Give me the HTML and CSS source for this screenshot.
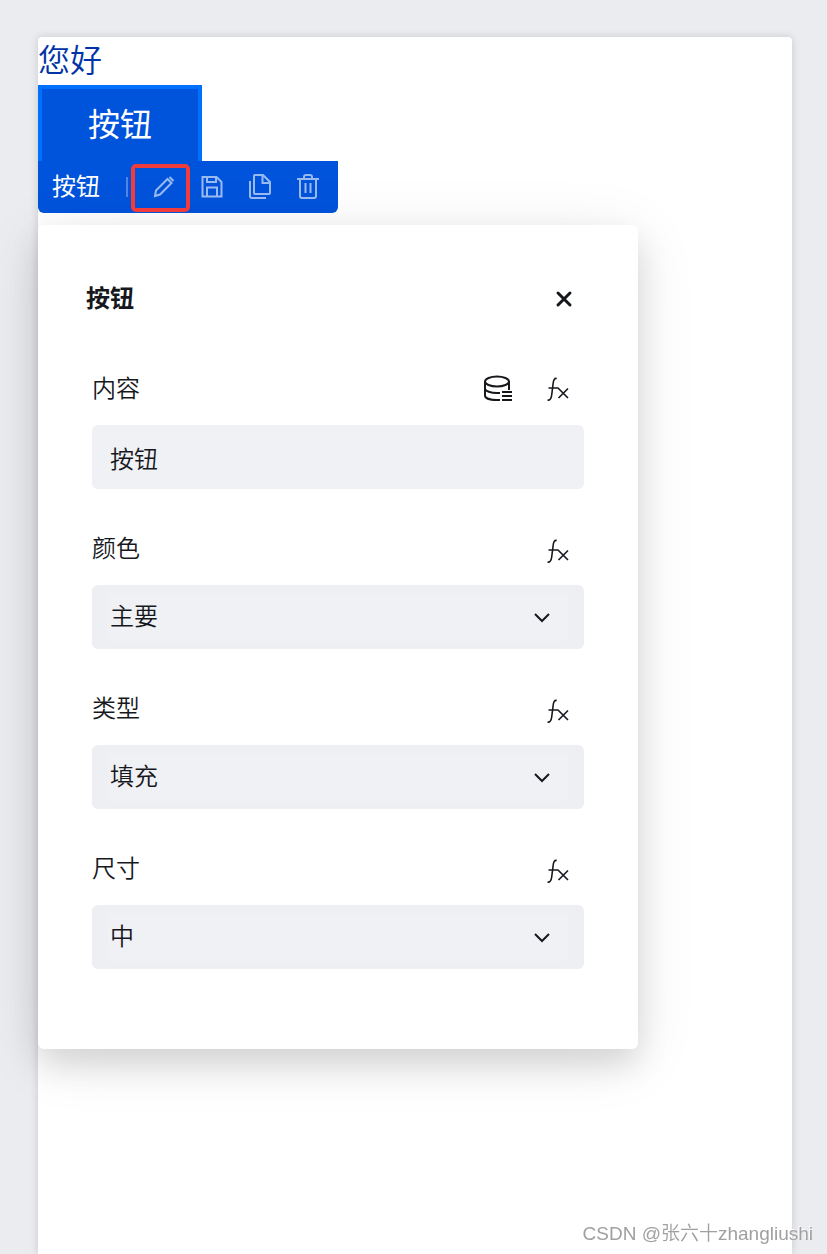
FILE: index.html
```html
<!DOCTYPE html>
<html lang="zh-CN">
<head>
    <meta charset="UTF-8">
    <meta name="viewport" content="width=device-width, initial-scale=1.0">
    <title>按钮</title>
    <link rel="stylesheet" href="styles.css">
</head>
<body>
    <main class="sheet">
        <p class="greeting">您好</p>
        <button type="button" class="primary-button">按钮</button>
        <div class="toolbar">
            <span class="toolbar-name">按钮</span>
            <span class="toolbar-divider"></span>
            <button type="button" class="tool tool-marked" aria-label="编辑">
                <svg width="24" height="24" viewBox="0 0 24 24"><path d="M3 21l1-5.500L15.500 4l4 4L8 19.500zM17.500 2l4 4"/></svg>
            </button>
            <button type="button" class="tool" aria-label="保存">
                <svg width="24" height="24" viewBox="0 0 24 24"><path d="M2.500 2h14l5 5v14.500h-19zM7 2v5h9V2M7 21.500v-9h10v9"/></svg>
            </button>
            <button type="button" class="tool" aria-label="复制">
                <svg width="24" height="24" viewBox="0 0 24 24"><path d="M7 0h8l7 7v11q0 1-1 1H7q-1 0-1-1V1q0-1 1-1zM14.500 0v8H22M2 6v15q0 2 2 2h14"/></svg>
            </button>
            <button type="button" class="tool" aria-label="删除">
                <svg width="24" height="24" viewBox="0 0 24 24"><path d="M1 4h22M8 4V2q0-2 2-2h4q2 0 2 2v2M4 4v17q0 2 2 2h12q2 0 2-2V4M9.500 8v10M14.500 8v10"/></svg>
            </button>
        </div>

        <section class="panel">
            <header class="panel-header">
                <h2>按钮</h2>
                <button type="button" class="close" aria-label="关闭">
                    <svg width="20" height="20" viewBox="0 0 20 20"><path d="M4 4l12 12M16 4L4 16"/></svg>
                </button>
            </header>
            <form>
                <div class="field">
                    <div class="field-head">
                        <label for="content">内容</label>
                        <button type="button" class="icon" aria-label="数据">
                            <svg width="30" height="28" viewBox="0 0 30 28"><ellipse cx="13" cy="6.500" rx="12" ry="5"/><path d="M1 6.500v14c0 2.700 5 4.500 12 4.500h3M1 13.500c0 2.700 6 4.500 12 4.500h3M25 6.500V15M18 17h10M18 21h10M18 25h10"/></svg>
                        </button>
                        <button type="button" class="icon fx" aria-label="公式">
                            <svg width="24" height="26" viewBox="0 0 24 26"><path d="M10.700 2.500C8.500 2 7.500 4 7.200 7L5.700 19C5.300 23 3.500 24.500 1.500 24M2.500 12H12l10 10M22 12.500L12.500 22"/></svg>
                        </button>
                    </div>
                    <input type="text" id="content" value="按钮">
                </div>
                <div class="field">
                    <div class="field-head">
                        <label for="color">颜色</label>
                        <button type="button" class="icon fx" aria-label="公式">
                            <svg width="24" height="26" viewBox="0 0 24 26"><path d="M10.700 2.500C8.500 2 7.500 4 7.200 7L5.700 19C5.300 23 3.500 24.500 1.500 24M2.500 12H12l10 10M22 12.500L12.500 22"/></svg>
                        </button>
                    </div>
                    <div class="select-box">
                        <select id="color"><option>主要</option></select>
                        <svg class="chevron" width="18" height="12" viewBox="0 0 18 12"><path d="M2 2l7 7 7-7"/></svg>
                    </div>
                </div>
                <div class="field">
                    <div class="field-head">
                        <label for="type">类型</label>
                        <button type="button" class="icon fx" aria-label="公式">
                            <svg width="24" height="26" viewBox="0 0 24 26"><path d="M10.700 2.500C8.500 2 7.500 4 7.200 7L5.700 19C5.300 23 3.500 24.500 1.500 24M2.500 12H12l10 10M22 12.500L12.500 22"/></svg>
                        </button>
                    </div>
                    <div class="select-box">
                        <select id="type"><option>填充</option></select>
                        <svg class="chevron" width="18" height="12" viewBox="0 0 18 12"><path d="M2 2l7 7 7-7"/></svg>
                    </div>
                </div>
                <div class="field">
                    <div class="field-head">
                        <label for="size">尺寸</label>
                        <button type="button" class="icon fx" aria-label="公式">
                            <svg width="24" height="26" viewBox="0 0 24 26"><path d="M10.700 2.500C8.500 2 7.500 4 7.200 7L5.700 19C5.300 23 3.500 24.500 1.500 24M2.500 12H12l10 10M22 12.500L12.500 22"/></svg>
                        </button>
                    </div>
                    <div class="select-box">
                        <select id="size"><option>中</option></select>
                        <svg class="chevron" width="18" height="12" viewBox="0 0 18 12"><path d="M2 2l7 7 7-7"/></svg>
                    </div>
                </div>
            </form>
        </section>
    </main>
    <div class="watermark">CSDN @张六十zhangliushi</div>
</body>
</html>
```

FILE: styles.css
```css
*, *::after {
    box-sizing: border-box;
}
body {
    margin: 0;
    padding: 37px 35px 0 38px;
    min-height: 100vh;
    display: flex;
    background-color: #ebecf0;
    color: #16181d;
    font-family: "Liberation Sans", "Noto Sans CJK SC", sans-serif;
    font-size: 24px;
    line-height: 36px;
}
button, input, select {
    font: inherit;
    color: inherit;
    border: none;
    margin: 0;
    padding: 0;
    background: none;
}
button {
    cursor: pointer;
}
svg {
    display: block;
    overflow: visible;
    fill: none;
    stroke: currentColor;
    stroke-width: 2;
}
.sheet {
    flex: 1;
    display: flex;
    flex-direction: column;
    align-items: flex-start;
    background-color: #ffffff;
    border-radius: 4px 4px 0 0;
    box-shadow: 0 0 8px rgba(0, 0, 0, 0.15);
}
.greeting {
    margin: 0;
    font-size: 32px;
    line-height: 48px;
    font-weight: 350;
    color: #0033a6;
}
.primary-button {
    height: 76px;
    padding: 0 46px;
    border: 4px solid #0070ff;
    border-bottom: none;
    background-color: #0053db;
    color: #ffffff;
    font-size: 32px;
}

/* toolbar under the selected element */
.toolbar {
    display: flex;
    align-items: center;
    height: 52px;
    padding: 0 6px 0 14px;
    background-color: #0053db;
    border-radius: 0 0 6px 6px;
    color: #ffffff;
}
.toolbar-divider {
    width: 2px;
    height: 20px;
    margin: 0 12px 0 26px;
    background-color: #4d87e6;
}
.tool {
    position: relative;
    display: flex;
    align-items: center;
    justify-content: center;
    width: 48px;
    height: 52px;
    color: #99baf1;
}
.tool-marked::after {
    content: "";
    position: absolute;
    top: 3px;
    left: -9px;
    width: 59px;
    height: 48px;
    border: 4px solid #f23c3c;
    border-radius: 5px;
}

/* settings panel */
.panel {
    width: 600px;
    max-width: 100%;
    margin-top: 12px;
    padding: 48px 54px 80px;
    background-color: #ffffff;
    border-radius: 6px;
    box-shadow: 0 16px 32px rgba(0, 0, 0, 0.12), 0 10px 64px rgba(0, 0, 0, 0.09);
}
.panel-header {
    display: flex;
    align-items: center;
    justify-content: space-between;
    height: 52px;
    margin: 0 10px 28px -6px;
}
.panel-header h2 {
    margin: 0;
    font-size: 24px;
    font-weight: 700;
}
.close svg {
    stroke-width: 3;
    stroke-linecap: round;
}
.field + .field {
    margin-top: 24px;
}
.field-head {
    display: flex;
    align-items: center;
    height: 72px;
    padding-right: 14px;
}
.field-head label {
    flex: 1;
    font-weight: 350;
}
.fx {
    margin-left: 32px;
}
.fx svg {
    stroke-width: 1.6;
}
.field + .field .fx {
    padding-top: 4px;
}
input {
    display: block;
    width: 100%;
    height: 64px;
    padding: 0 18px;
    border-radius: 6px;
    background-color: #f0f1f5;
    font-weight: 350;
}
.select-box {
    position: relative;
    padding: 8px 16px;
    border-radius: 6px;
    background-color: #eeeff3;
}
select {
    display: block;
    appearance: none;
    width: 100%;
    height: 48px;
    padding: 0 2px;
    border-radius: 4px;
    background-color: #f0f1f5;
    font-weight: 350;
}
.chevron {
    position: absolute;
    top: 27px;
    right: 33px;
    pointer-events: none;
}
.watermark {
    position: fixed;
    right: 14px;
    bottom: 6px;
    font-size: 19px;
    line-height: 28px;
    font-weight: 350;
    color: #a0a0a0;
    text-shadow: -1px -1px 0 #ffffff;
}
```
